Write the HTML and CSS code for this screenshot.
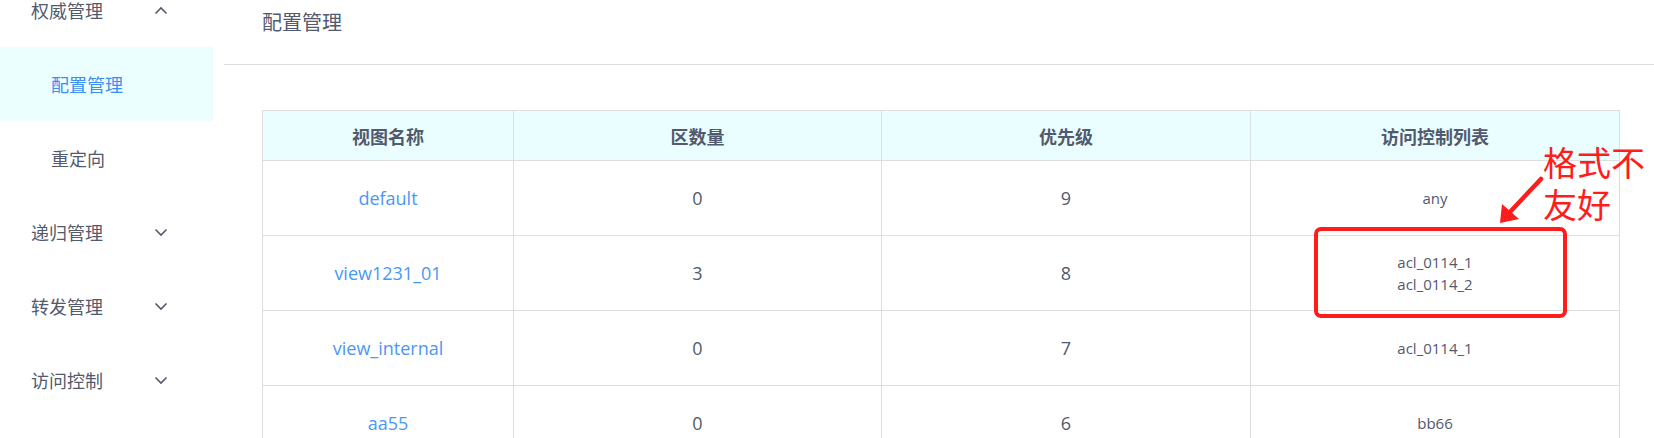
FILE: index.html
```html
<!DOCTYPE html>
<html lang="zh-CN">
<head>
<meta charset="utf-8">
<title>配置管理</title>
<link rel="stylesheet" href="styles.css">
</head>
<body>
<div class="page">
  <aside class="sidebar">
    <div class="menu-item">
      <span>权威管理</span>
      <svg class="chev" width="14" height="9" viewBox="0 0 14 9"><polyline points="1.5,7.5 7,2 12.5,7.5" fill="none" stroke="#515a6e" stroke-width="1.6"/></svg>
    </div>
    <div class="menu-sub active">配置管理</div>
    <div class="menu-sub">重定向</div>
    <div class="menu-item">
      <span>递归管理</span>
      <svg class="chev" width="14" height="9" viewBox="0 0 14 9"><polyline points="1.5,1.5 7,7 12.5,1.5" fill="none" stroke="#515a6e" stroke-width="1.6"/></svg>
    </div>
    <div class="menu-item">
      <span>转发管理</span>
      <svg class="chev" width="14" height="9" viewBox="0 0 14 9"><polyline points="1.5,1.5 7,7 12.5,1.5" fill="none" stroke="#515a6e" stroke-width="1.6"/></svg>
    </div>
    <div class="menu-item">
      <span>访问控制</span>
      <svg class="chev" width="14" height="9" viewBox="0 0 14 9"><polyline points="1.5,1.5 7,7 12.5,1.5" fill="none" stroke="#515a6e" stroke-width="1.6"/></svg>
    </div>
  </aside>
  <main class="content">
    <div class="header"><h1 class="title">配置管理</h1></div>
    <div class="table-wrap">
      <table class="grid">
        <colgroup>
          <col class="c1"><col class="c2"><col class="c3"><col class="c4">
        </colgroup>
        <thead>
          <tr><th>视图名称</th><th>区数量</th><th>优先级</th><th>访问控制列表</th></tr>
        </thead>
        <tbody>
          <tr><td><a class="link">default</a></td><td>0</td><td>9</td><td class="acl">any</td></tr>
          <tr><td><a class="link">view1231_01</a></td><td>3</td><td>8</td><td class="acl"><div>acl_0114_1</div><div>acl_0114_2</div></td></tr>
          <tr><td><a class="link">view_internal</a></td><td>0</td><td>7</td><td class="acl">acl_0114_1</td></tr>
          <tr><td><a class="link">aa55</a></td><td>0</td><td>6</td><td class="acl">bb66</td></tr>
        </tbody>
      </table>
    </div>
  </main>
</div>
<svg class="overlay" width="1654" height="438" viewBox="0 0 1654 438">
  <rect x="1316" y="229" width="249" height="87" rx="5" ry="5" fill="none" stroke="#ff1c1c" stroke-width="4"/>
  <line x1="1541" y1="179" x2="1509" y2="213" stroke="#ff1c1c" stroke-width="4.5" stroke-linecap="round"/>
  <polygon points="1500,223 1502,204 1519,219" fill="#ff1c1c"/>
</svg>
<div class="note">格式不<br>友好</div>
</body>
</html>
```
FILE: styles.css
```css
html, body {
  margin: 0;
  padding: 0;
  background: #fff;
}
body {
  position: relative;
  width: 1654px;
  height: 438px;
  overflow: hidden;
  font-family: "Open Sans", "Noto Sans CJK SC", sans-serif;
  color: #515a6e;
}
.page {
  display: flex;
  align-items: flex-start;
}
.sidebar {
  width: 213px;
  flex: 0 0 213px;
  margin-top: -27px;
  display: flex;
  flex-direction: column;
}
.menu-item, .menu-sub {
  height: 74px;
  display: flex;
  align-items: center;
  font-size: 18px;
  font-family: "Noto Sans CJK SC", sans-serif;
  color: #515a6e;
  box-sizing: border-box;
}
.menu-item {
  justify-content: space-between;
  padding: 0 45px 0 31px;
}
.menu-sub {
  padding-left: 51px;
}
.menu-sub.active {
  background: #ebffff;
  color: #3b8ef5;
}
.chev {
  display: block;
}
.content {
  flex: 1;
  display: flex;
  flex-direction: column;
}
.header {
  margin-left: 11px;
  height: 64px;
  border-bottom: 1px solid #dcdee2;
  padding-left: 38px;
  box-sizing: content-box;
}
.title {
  margin: 0;
  padding-top: 10px;
  font-size: 20px;
  line-height: 24px;
  font-weight: normal;
  font-family: "Noto Sans CJK SC", sans-serif;
  color: #515a6e;
}
.table-wrap {
  padding: 45px 35px 0 49px;
}
.grid {
  border-collapse: collapse;
  table-layout: fixed;
  width: 1357px;
}
.c1 { width: 251px; }
.c2 { width: 368px; }
.c3 { width: 369px; }
.c4 { width: 369px; }
.grid th, .grid td {
  border: 1px solid #dcdee2;
  text-align: center;
  padding: 0;
}
.grid th {
  height: 49px;
  background: #ebfeff;
  font-family: "Noto Sans CJK SC", sans-serif;
  font-size: 18px;
  font-weight: bold;
  color: #515a6e;
}
.grid td {
  height: 74px;
  font-size: 18px;
  color: #515a6e;
}
.link {
  color: #4a97f8;
  text-decoration: none;
}
.grid td.acl {
  font-size: 15px;
  line-height: 22px;
}
.overlay {
  position: absolute;
  left: 0;
  top: 0;
  pointer-events: none;
}
.note {
  position: absolute;
  left: 1543px;
  top: 141px;
  font-family: "Noto Sans CJK SC", sans-serif;
  font-size: 34px;
  line-height: 42px;
  color: #ff1c1c;
}
```
